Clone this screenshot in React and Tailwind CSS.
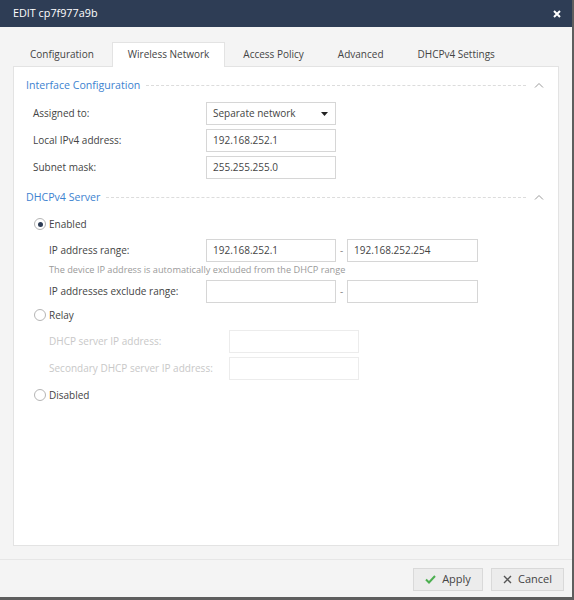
import React from "react";

const font = { fontFamily: '"Open Sans", "Noto Sans", sans-serif' };

function SectionTitle({ title }) {
  return (
    <div className="flex items-center h-[16px]">
      <span className="text-[10.6px] text-[#3d82d0] leading-none">{title}</span>
      <div className="flex-1 ml-[6px] mr-[8px] border-t border-dashed border-[#dcdcdc]" />
      <svg width="10" height="6" viewBox="0 0 10 6" className="mr-[2px]">
        <path d="M1 5.5 L5 1.5 L9 5.5" fill="none" stroke="#9a9a9a" strokeWidth="1" />
      </svg>
    </div>
  );
}

function Input({ value = "", w = "w-[130px]", disabled = false }) {
  return (
    <div
      className={`${w} h-[23px] shrink-0 border ${disabled ? "border-[#ececec]" : "border-[#d6d6d6]"} bg-white flex items-center px-[6px] text-[10px] text-[#444]`}
    >
      {value}
    </div>
  );
}

function Radio({ checked, label }) {
  return (
    <div className="flex items-center h-[16px] pl-[8px]">
      <div className="w-[12px] h-[12px] rounded-full border border-[#b5b5b5] bg-white flex items-center justify-center">
        {checked && <div className="w-[5px] h-[5px] rounded-full bg-[#2d3c55]" />}
      </div>
      <span className="ml-[3px] text-[10px] text-[#444]">{label}</span>
    </div>
  );
}

function Tab({ label, active }) {
  return (
    <div
      className={`h-[25px] -mb-px relative px-[15px] pb-[2px] flex items-center text-[10px] text-[#444] border border-b-0 ${
        active ? "bg-white border-[#e3e3e3]" : "border-transparent"
      }`}
    >
      {label}
    </div>
  );
}

export default function App() {
  return (
    <div
      style={font}
      className="w-[574px] h-[600px] flex flex-col bg-[#f4f4f4] border-r-2 border-b-[3px] border-[#5e5e5e] overflow-hidden"
    >
      {/* header */}
      <div className="h-[27px] shrink-0 bg-[#2e3d55] flex items-center justify-between pl-[13px] pr-[11px]">
        <span className="text-white text-[10.8px]">EDIT cp7f977a9b</span>
        <svg width="8" height="8" viewBox="0 0 8 8">
          <path d="M1 1 L7 7 M7 1 L1 7" stroke="#ffffff" strokeWidth="2" />
        </svg>
      </div>

      {/* body */}
      <div className="flex-1 flex flex-col px-[13px] pt-[15px] pb-[13px] border-b border-[#e6e6e6]">
        <div className="flex items-end gap-[2px] pl-[1px]">
          <Tab label="Configuration" />
          <Tab label="Wireless Network" active />
          <Tab label="Access Policy" />
          <Tab label="Advanced" />
          <Tab label="DHCPv4 Settings" />
        </div>
        <div className="flex-1 bg-white border border-[#e3e3e3] pl-[12px] pr-[12px] pt-[10px]">
          <SectionTitle title="Interface Configuration" />
          <div className="mt-[9px] flex flex-col gap-[4px] pl-[7px]">
            <div className="flex items-center">
              <span className="w-[173px] text-[10px] text-[#444]">Assigned to:</span>
              <div className="w-[130px] h-[23px] border border-[#d6d6d6] bg-white flex items-center justify-between pl-[6px] pr-[7px] text-[10px] text-[#444]">
                <span>Separate network</span>
                <svg width="7" height="4" viewBox="0 0 7 4">
                  <path d="M0 0 H7 L3.5 4 Z" fill="#222" />
                </svg>
              </div>
            </div>
            <div className="flex items-center">
              <span className="w-[173px] text-[10px] text-[#444]">Local IPv4 address:</span>
              <Input value="192.168.252.1" />
            </div>
            <div className="flex items-center">
              <span className="w-[173px] text-[10px] text-[#444]">Subnet mask:</span>
              <Input value="255.255.255.0" />
            </div>
          </div>

          <div className="mt-[10px]">
            <SectionTitle title="DHCPv4 Server" />
          </div>

          <div className="mt-[11px]">
            <Radio checked label="Enabled" />
          </div>
          <div className="pl-[23px]">
            <div className="mt-[7px] flex items-center">
              <span className="w-[157px] shrink-0 text-[10px] text-[#444]">IP address range:</span>
              <Input value="192.168.252.1" />
              <span className="w-[11px] text-center text-[10px] text-[#888]">-</span>
              <Input value="192.168.252.254" w="w-[131px]" />
            </div>
            <div className="mt-[1px] h-[14px] flex items-center text-[9.2px] text-[#9a9a9a]">
              The device IP address is automatically excluded from the DHCP range
            </div>
            <div className="mt-[3px] flex items-center">
              <span className="w-[157px] shrink-0 text-[10px] text-[#444]">IP addresses exclude range:</span>
              <Input />
              <span className="w-[11px] text-center text-[10px] text-[#888]">-</span>
              <Input w="w-[131px]" />
            </div>
          </div>

          <div className="mt-[4px]">
            <Radio label="Relay" />
          </div>
          <div className="pl-[23px]">
            <div className="mt-[7px] flex items-center">
              <span className="w-[180px] shrink-0 text-[10px] text-[#c8c8c8]">DHCP server IP address:</span>
              <Input disabled />
            </div>
            <div className="mt-[4px] flex items-center">
              <span className="w-[180px] shrink-0 text-[10px] text-[#c8c8c8] whitespace-nowrap">Secondary DHCP server IP address:</span>
              <Input disabled />
            </div>
          </div>

          <div className="mt-[7px]">
            <Radio label="Disabled" />
          </div>
        </div>
      </div>

      {/* footer */}
      <div className="h-[37px] shrink-0 flex items-start justify-end gap-[8px] pt-[8px] pr-[8px]">
        <button className="w-[70px] h-[23px] bg-[#ececec] border border-[#d9d9d9] flex items-center justify-center gap-[6px] text-[11px] text-[#444]">
          <svg width="11" height="9" viewBox="0 0 11 9">
            <path d="M1 4.5 L4 7.5 L10 1" fill="none" stroke="#4caf50" strokeWidth="2" />
          </svg>
          Apply
        </button>
        <button className="w-[73px] h-[23px] bg-[#ececec] border border-[#d9d9d9] flex items-center justify-center gap-[6px] text-[11px] text-[#444]">
          <svg width="9" height="9" viewBox="0 0 9 9">
            <path d="M1 1 L8 8 M8 1 L1 8" stroke="#555" strokeWidth="1.4" />
          </svg>
          Cancel
        </button>
      </div>
    </div>
  );
}
